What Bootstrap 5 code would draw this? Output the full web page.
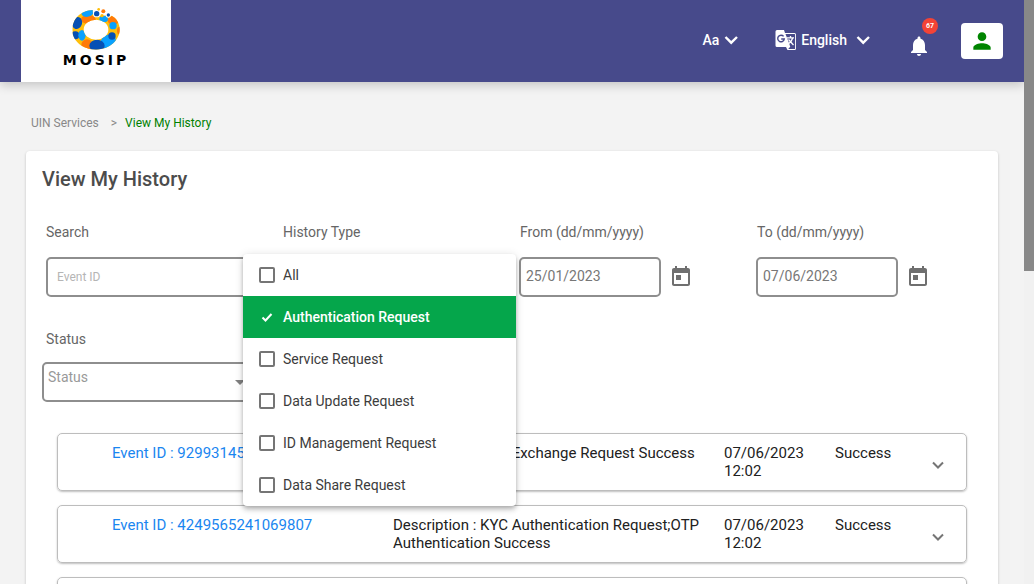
<!DOCTYPE html>
<html lang="en">
<head>
<meta charset="utf-8">
<meta name="viewport" content="width=device-width, initial-scale=1">
<title>View My History</title>
<link rel="stylesheet" href="https://cdn.jsdelivr.net/npm/bootstrap@5.3.0/dist/css/bootstrap.min.css">
<style>
body{font-family:Roboto,"Liberation Sans",sans-serif;font-size:14px;line-height:18px;color:#666;background:#f3f3f3}
button,input,select{font-family:inherit}
.shell{height:100vh}
.scroll-track{width:10px;background:#f1f1f1}
.scroll-thumb{height:271px;background:#888}
.topbar{height:82px;background:#474a8b;padding:0 21px;box-shadow:0 3px 10px rgba(0,0,0,.2);z-index:2}
.brand{width:150px}
.brand-name{font:700 14px/16px "DejaVu Sans",sans-serif;letter-spacing:3px;color:#000}
.top-btn{border:0;background:none;color:#fff;font-weight:500;padding:0 0 2px}
.size-btn{margin-right:12px}
.lang-btn{margin-right:20px}
.bell-btn{padding:10px 0 0;margin-right:30px}
.bell-count{left:15px;top:-6px;width:16px;height:16px;background:#f44336;color:#fff;font-size:7px;font-weight:700;line-height:16px}
.user-btn{width:42px;height:36px;border:0;border-radius:4px;background:#fff;padding:0}
.crumbs{font-size:12px;padding:32px 31px 19px;color:#888;gap:12px}
.crumbs a{color:#888;text-decoration:none}
.crumbs .here{color:#008000}
.panel{margin:0 26px;padding:16px 12px;background:#fff;border-radius:4px;box-shadow:0 1px 3px rgba(0,0,0,.2)}
.panel h1{font-size:20px;line-height:24px;font-weight:500;color:#4c4c4c;margin:0;padding-left:4px}
.field{padding:0 8px}
.field label{display:block;margin-bottom:16px}
.field .status-label{margin-bottom:14px}
.box{height:40px;border:2px solid #8e8e8e;border-radius:5px;background-color:#fff;color:#777;font-size:14px;outline:0}
.search-box{width:213px;padding:0 9px;font-size:12px}
.search-box::placeholder{color:#b5b5b5}
.date-box{width:142px;padding:0 5px 2px;margin-left:-1px}
.cal-btn{border:0;background:none;padding:0;margin-left:8px}
.status-box{width:213px;margin-left:-4px;padding:0 4px 10px;appearance:none;color:#999;background:#fff url("data:image/svg+xml,%3Csvg xmlns='http://www.w3.org/2000/svg' viewBox='0 0 10 5'%3E%3Cpath d='M0 0h10L5 5z' fill='%23808080'/%3E%3C/svg%3E") no-repeat right 8px center/10px 5px}
.type-menu{left:-40px;top:31px;width:273px;background:#fff;border-radius:4px;box-shadow:0 2px 4px -1px rgba(0,0,0,.2),0 4px 5px rgba(0,0,0,.14),0 1px 10px rgba(0,0,0,.12);z-index:3}
.field .type-item{display:flex;align-items:center;height:42px;margin:0;padding:0 16px;gap:8px;color:#3c3c3c}
.type-item input{appearance:none;width:16px;height:16px;margin:0;border:2px solid #757575;border-radius:2px;flex:none}
.field .type-item.picked{background:#05a64b;color:#fff;font-weight:500}
.picked input{border:0;background:url("data:image/svg+xml,%3Csvg xmlns='http://www.w3.org/2000/svg' viewBox='0 0 16 16'%3E%3Cpath d='M3.5 8.5l3 3 6-6.500' fill='none' stroke='%23fff' stroke-width='2'/%3E%3C/svg%3E")}
.events{margin:31px 19px 0;gap:14px}
.event{display:grid;grid-template-columns:281fr 331fr 111fr 95fr 36fr;height:58px;padding:10px 0 0 54px;border:1px solid #bdbdbd;border-radius:5px;box-shadow:0 1px 2px rgba(0,0,0,.25);font-size:15px;color:#212121}
.event p{margin:0;padding-right:20px}
.event a{color:#1a86f0;text-decoration:none}
.event button{border:0;background:none;padding:0;width:16px;height:16px;margin-top:13px;line-height:0}
</style>
</head>
<body>
<div class="shell d-flex overflow-hidden">
<div class="flex-grow-1 overflow-hidden">
<header class="topbar position-relative d-flex align-items-center">
  <a href="#" class="brand h-100 bg-white d-flex flex-column align-items-center text-decoration-none pt-1">
    <svg width="52" height="48" viewBox="210 11 156 144" aria-hidden="true">
      <defs><clipPath id="ring"><path clip-rule="evenodd" d="M217 90C217 54 244 30 278 29L279 42Q284 49 296 48L328 44Q348 50 355 68C371 106 338 148 288 148C248 148 217 122 217 90ZM251 88a37 30 0 1 0 74 0a37 30 0 1 0-74 0Z"/></clipPath></defs>
      <g clip-path="url(#ring)">
        <path fill="#ffbf0b" d="M210 20h156v135H210z"/>
        <ellipse cx="265" cy="57" rx="22" ry="13" fill="#ff7a09"/>
        <ellipse cx="263" cy="37" rx="19" ry="12" transform="rotate(-15 263 37)" fill="#09a1ff"/>
        <ellipse cx="231" cy="68" rx="15" ry="18" transform="rotate(20 231 68)" fill="#0650b4"/>
        <circle cx="226" cy="105" r="12" fill="#0650b4"/>
        <ellipse cx="246" cy="105" rx="11" ry="16" fill="#09a1ff"/>
        <circle cx="261" cy="134" r="17" fill="#ff7a09"/>
        <ellipse cx="324" cy="124" rx="25" ry="20" transform="rotate(-35 324 124)" fill="#09a1ff"/>
        <ellipse cx="291" cy="136" rx="23" ry="18" fill="#0650b4"/>
        <circle cx="336" cy="107" r="11" fill="#0650b4"/>
        <ellipse cx="340" cy="60" rx="17" ry="13" fill="#ff7a09"/>
        <circle cx="339" cy="76" r="11" fill="#09a1ff"/>
        <ellipse cx="311" cy="56" rx="13" ry="10" fill="#09a1ff"/>
        <ellipse cx="358" cy="91" rx="7" ry="11" fill="#ff7a09"/>
      </g>
      <circle cx="290" cy="40" r="11" fill="#fff"/><circle cx="325" cy="44" r="8" fill="#fff"/>
      <circle cx="290" cy="40" r="8" fill="#0650b4"/><circle cx="306" cy="46" r="5" fill="#ffbf0b"/><circle cx="310" cy="33" r="6" fill="#ff7a09"/><circle cx="325" cy="44" r="5" fill="#0650b4"/><circle cx="296" cy="27" r="4" fill="#ffbf0b"/>
    </svg>
    <span class="brand-name">MOSIP</span>
  </a>
  <button class="top-btn size-btn ms-auto d-flex align-items-center gap-1" type="button">Aa
    <svg width="16" height="16" viewBox="0 0 16 16" fill="none" stroke="#fff" stroke-width="2.400"><path d="M2.500 5l5.700 5.700L14 5"/></svg></button>
  <button class="top-btn lang-btn ms-4 d-flex align-items-center gap-1" type="button">
    <svg width="22" height="22" viewBox="0 0 22 22" aria-hidden="true"><path fill="#fff" d="M2 1h7l1 3h9.500Q21 4 21 5.500v14q0 1.500-1.500 1.500h-7L11 18H2Q.5 18 .5 16.500v-14Q.5 1 2 1z"/><path fill="#474a8b" d="M10.500 5h9q.6 0 .6.600v13.800q0 .6-.6.600h-6.300l2-2.300-1-3.200z"/><path d="M12 8.800h7M15.500 7v1.800M17.700 9q-1 3.500-4 5.500M13.500 10.500l5 5.500" fill="none" stroke="#fff" stroke-width="1.300"/><path d="M8.600 7.400A3.300 3.300 0 1 0 9.300 10H6.200" fill="none" stroke="#474a8b" stroke-width="1.400"/></svg>
    English
    <svg class="ms-1" width="16" height="16" viewBox="0 0 16 16" fill="none" stroke="#fff" stroke-width="2.400"><path d="M2.500 5l5.700 5.700L14 5"/></svg></button>
  <button class="top-btn bell-btn position-relative ms-3" type="button" aria-label="Notifications">
    <svg width="24" height="24" viewBox="0 0 24 24" fill="#fff"><path d="M12 22c1.100 0 2-.9 2-2h-4c0 1.100.9 2 2 2zm6-6v-5c0-3.070-1.630-5.640-4.500-6.320V4c0-.83-.67-1.500-1.500-1.500s-1.500.67-1.500 1.500v.68C7.640 5.360 6 7.920 6 11v5l-2 2v1h16v-1l-2-2z"/></svg>
    <span class="bell-count position-absolute rounded-circle text-center">67</span></button>
  <button class="user-btn d-flex align-items-center justify-content-center" type="button" aria-label="Account">
    <svg width="26" height="26" viewBox="0 0 24 24" fill="#008500"><path d="M12 12c2.210 0 4-1.790 4-4s-1.790-4-4-4-4 1.790-4 4 1.790 4 4 4zm0 2c-2.670 0-8 1.340-8 4v2h16v-2c0-2.660-5.330-4-8-4z"/></svg></button>
</header>
<nav class="crumbs d-flex" aria-label="Breadcrumb"><a href="#">UIN Services</a><span class="d-flex gap-2"><span>&gt;</span><span class="here">View My History</span></span></nav>
<main class="panel">
  <h1>View My History</h1>
  <form>
    <div class="row g-0 mt-3">
      <div class="col-3 field pt-3"><label for="search">Search</label><input id="search" class="box search-box" type="text" placeholder="Event ID"></div>
      <div class="col-3 field pt-3"><div class="position-relative"><label for="type">History Type</label>
        <button id="type" class="box w-75" type="button" aria-expanded="true"></button>
        <div class="type-menu position-absolute overflow-hidden">
          <label class="type-item"><input type="checkbox">All</label>
          <label class="type-item picked"><input type="checkbox" checked>Authentication Request</label>
          <label class="type-item"><input type="checkbox">Service Request</label>
          <label class="type-item"><input type="checkbox">Data Update Request</label>
          <label class="type-item"><input type="checkbox">ID Management Request</label>
          <label class="type-item"><input type="checkbox">Data Share Request</label>
        </div></div></div>
      <div class="col-3 field pt-3"><label for="from">From (dd/mm/yyyy)</label><div class="d-flex align-items-center"><input id="from" class="box date-box" type="text" value="25/01/2023"><button class="cal-btn" type="button" aria-label="Choose start date"><svg width="24" height="24" viewBox="0 0 24 24" fill="#6f6f6f"><path d="M19 3h-1V1h-2v2H8V1H6v2H5c-1.110 0-2 .9-2 2v14c0 1.100.89 2 2 2h14c1.100 0 2-.9 2-2V5c0-1.100-.9-2-2-2zm0 16H5V8h14v11zM7 10h5v5H7z"/></svg></button></div></div>
      <div class="col-3 field pt-3"><label for="to">To (dd/mm/yyyy)</label><div class="d-flex align-items-center"><input id="to" class="box date-box" type="text" value="07/06/2023"><button class="cal-btn" type="button" aria-label="Choose end date"><svg width="24" height="24" viewBox="0 0 24 24" fill="#6f6f6f"><path d="M19 3h-1V1h-2v2H8V1H6v2H5c-1.110 0-2 .9-2 2v14c0 1.100.89 2 2 2h14c1.100 0 2-.9 2-2V5c0-1.100-.9-2-2-2zm0 16H5V8h14v11zM7 10h5v5H7z"/></svg></button></div></div>
      <div class="col-3 field mt-3 pt-3"><label class="status-label" for="status">Status</label><select id="status" class="box status-box"><option>Status</option></select></div>
    </div>
  </form>
  <section class="events d-flex flex-column">
    <article class="event"><a href="#">Event ID : 9299314520</a><p>Description : KYC Exchange Request Success</p><p>07/06/2023 12:02</p><span>Success</span><button type="button" aria-label="Show details"><svg width="16" height="16" viewBox="0 0 16 16" fill="none" stroke="#757575" stroke-width="2"><path d="M3 5.500l5 5 5-5"/></svg></button></article>
    <article class="event"><a href="#">Event ID : 4249565241069807</a><p>Description : KYC Authentication Request;OTP Authentication Success</p><p>07/06/2023 12:02</p><span>Success</span><button type="button" aria-label="Show details"><svg width="16" height="16" viewBox="0 0 16 16" fill="none" stroke="#757575" stroke-width="2"><path d="M3 5.500l5 5 5-5"/></svg></button></article>
    <article class="event"></article>
  </section>
</main>
</div>
<div class="scroll-track flex-shrink-0" aria-hidden="true"><div class="scroll-thumb"></div></div>
</div>
<script src="https://cdn.jsdelivr.net/npm/bootstrap@5.3.0/dist/js/bootstrap.bundle.min.js"></script>
</body>
</html>
